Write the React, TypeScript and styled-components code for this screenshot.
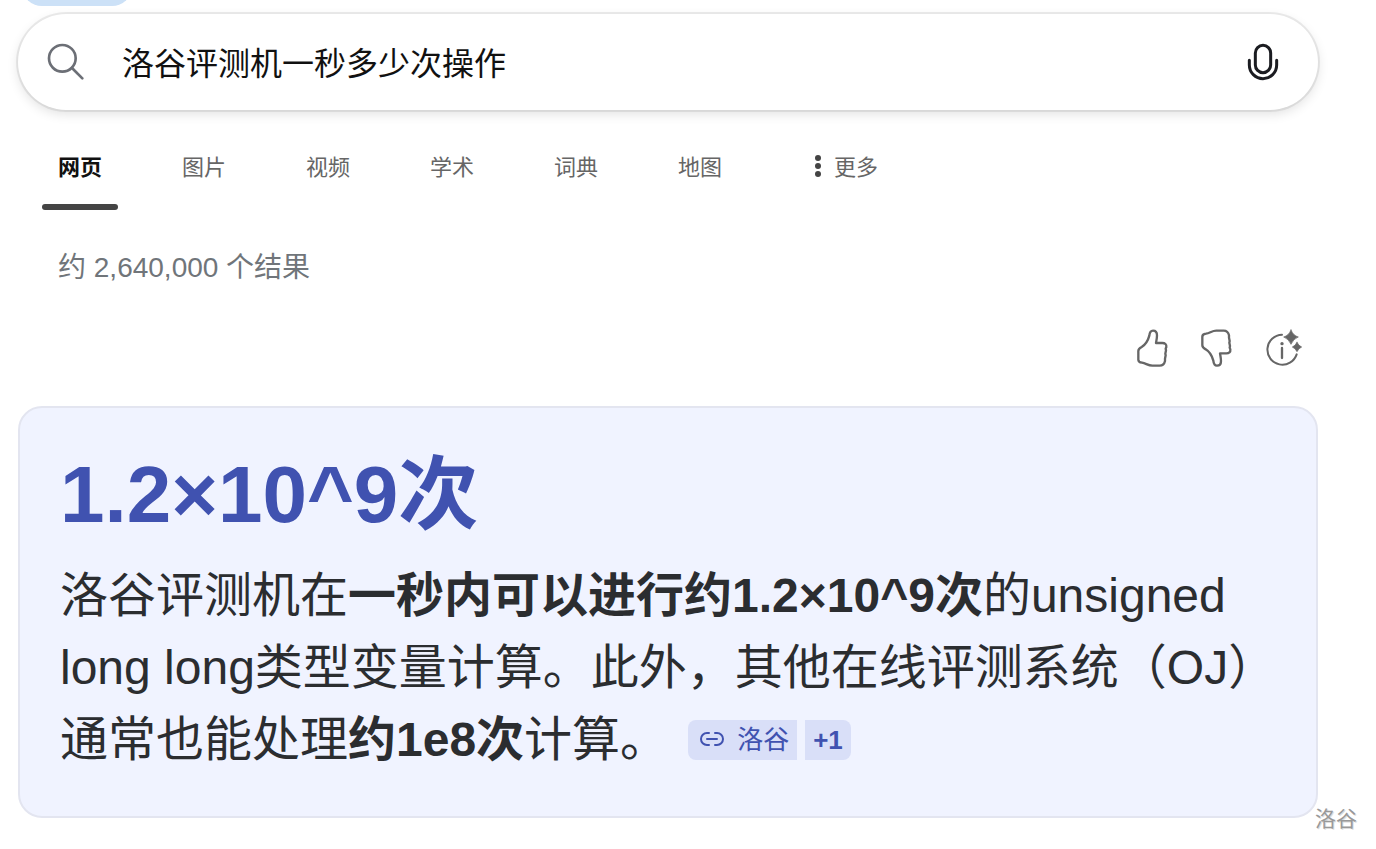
import React from "react";
import styled, { createGlobalStyle } from "styled-components";

const GlobalStyle = createGlobalStyle`
  * { box-sizing: border-box; }
  body {
    margin: 0;
    background: #fff;
    font-family: "Liberation Sans", "Noto Sans CJK SC", sans-serif;
  }
  button, input { font: inherit; }
  button { border: 0; background: none; padding: 0; cursor: pointer; }
`;

const Page = styled.div`
  position: relative;
  padding: 0 58px 30px 18px;
`;

const TopStrip = styled.header`
  display: flex;
  align-items: flex-end;
  height: 6px;
  padding-left: 4px;
  overflow: hidden;
`;

const Pill = styled.button`
  flex: none;
  width: 110px;
  height: 40px;
  border-radius: 20px;
  && { background: #cce1f7; }
`;

const SearchForm = styled.form`
  display: flex;
  align-items: center;
  height: 96px;
  margin-top: 8px;
  padding: 0 35px 0 28px;
  border-radius: 48px;
  background: #fff;
  box-shadow: 0 0 0 2px rgba(0, 0, 0, 0.07), 0 4px 12px rgba(0, 0, 0, 0.12);
`;

const SearchInput = styled.input`
  flex: 1;
  min-width: 0;
  margin: 0 36px;
  padding: 4px 0 0;
  border: 0;
  outline: 0;
  background: transparent;
  color: #111;
  font-size: 32px;
  line-height: 48px;
`;

const IconButton = styled.button`
  display: flex;
  color: ${(p) => p.color};
`;

const Tabs = styled.nav`
  display: flex;
  gap: 48px;
  margin-top: 40px;
  padding-left: 24px;
`;

const Tab = styled.a<{ $active?: boolean }>`
  display: flex;
  flex-direction: column;
  gap: 18px;
  color: ${(p) => (p.$active ? "#111" : "#666")};
  font-size: 22px;
  font-weight: ${(p) => (p.$active ? 700 : 400)};
  line-height: 36px;
  text-decoration: none;

  &::after {
    content: "";
    height: 6px;
    border-radius: 3px;
    background: ${(p) => (p.$active ? "#444" : "transparent")};
  }
`;

const TabLabel = styled.span`
  display: flex;
  align-items: center;
  padding: 0 16px;
`;

const ResultCount = styled.p`
  margin: 40px 0 0;
  padding-left: 40px;
  color: #70757a;
  font-size: 28px;
  line-height: 36px;
`;

const Feedback = styled.div`
  display: flex;
  justify-content: flex-end;
  gap: 24px;
  margin-top: 42px;
  padding-right: 14px;
`;

const AnswerCard = styled.section`
  margin-top: 38px;
  padding: 40px;
  border: 2px solid #e3e5f0;
  border-radius: 24px;
  background: #f0f3ff;
`;

const Headline = styled.h1`
  margin: 0 0 18px;
  color: #4052b0;
  font-size: 80px;
  line-height: 94px;
`;

const Answer = styled.p`
  margin: 0;
  color: #2b2d30;
  font-size: 48px;
  line-height: 72px;
`;

const Sources = styled.span`
  display: inline-flex;
  gap: 8px;
  margin: 16px 0 0 20px;
  vertical-align: top;
`;

const Source = styled.a<{ $side: "left" | "right" }>`
  display: flex;
  align-items: center;
  gap: 13px;
  height: 40px;
  padding: 0 8px 0 ${(p) => (p.$side === "left" ? "12px" : "8px")};
  border-radius: ${(p) => (p.$side === "left" ? "8px 0 0 8px" : "0 8px 8px 0")};
  background: #d9dff8;
  color: #4052b0;
  font-size: 26px;
  font-weight: ${(p) => (p.$side === "left" ? 400 : 700)};
  line-height: 40px;
  text-decoration: none;
`;

const Watermark = styled.span`
  position: absolute;
  right: 19px;
  bottom: 13px;
  color: #999;
  font-size: 21px;
  line-height: 32px;
  text-shadow: 1px 1px 0 #ddd;
`;

const SearchIcon = () => (
  <svg width="40" height="40" viewBox="138 126 120 120" fill="none" stroke="currentColor" strokeWidth="8" strokeLinecap="round">
    <circle cx="187" cy="175" r="40" />
    <path d="M216 204 247 235" />
  </svg>
);

const MicIcon = () => (
  <svg width="40" height="40" viewBox="189 126 120 120" fill="none" stroke="currentColor" strokeWidth="9" strokeLinecap="round">
    <rect x="226" y="136" width="46" height="82" rx="23" />
    <path d="M208 181v14a41 41 0 0 0 82 0v-14" />
  </svg>
);

const DotsIcon = () => (
  <svg width="32" height="32" viewBox="0 0 32 32" fill="#444">
    <circle cx="16" cy="6" r="3" />
    <circle cx="16" cy="14" r="3" />
    <circle cx="16" cy="22" r="3" />
  </svg>
);

const thumb =
  "M85 123C85 116 89 114 95 111C108 103 114 92 118 77C119 66 122 62 129 62C138 62 141 68 141 76C141 85 139 92 138 99H157C165 99 170 103 169 111L167 116L168 121L166 131L167 136L165 146V153C163 162 158 167 149 167H127C114 167 108 160 96 158C89 157 85 155 85 149Z";

const ThumbUpIcon = () => (
  <svg width="40" height="40" viewBox="66 54 120 120" fill="none" stroke="currentColor" strokeWidth="7" strokeLinejoin="round">
    <path d={thumb} />
  </svg>
);

const ThumbDownIcon = () => (
  <svg width="40" height="40" viewBox="66 54 120 120" fill="none" stroke="currentColor" strokeWidth="7" strokeLinejoin="round">
    <path d={thumb} transform="matrix(1 0 0 -1 0 229)" />
  </svg>
);

const InfoSparkleIcon = () => (
  <svg width="44" height="40" viewBox="450 54 132 120" fill="none" stroke="currentColor" strokeWidth="6" strokeLinecap="round">
    <path d="M516 74A45 45 0 1 0 560 133" />
    <path d="M516 114V144" strokeWidth="7" />
    <circle cx="516" cy="101" r="5" fill="currentColor" stroke="none" />
    <path strokeWidth="2" fill="currentColor" d="M543 60Q550 77 565 81Q550 86 543 103Q536 86 521 81Q536 77 543 60Z" />
    <path strokeWidth="2" fill="currentColor" d="M561 97Q566 108 575 111Q566 115 561 125Q556 115 547 111Q556 108 561 97Z" />
  </svg>
);

const LinkIcon = () => (
  <svg width="24" height="16" viewBox="0 0 24 16" fill="none" stroke="currentColor" strokeWidth="2" strokeLinecap="round">
    <path d="M9 1H7a6 6 0 0 0 0 12h2M15 1h2a6 6 0 0 1 0 12h-2M7 7h10" />
  </svg>
);

const tabs = ["网页", "图片", "视频", "学术", "词典", "地图"];

export default function App() {
  return (
    <Page>
      <GlobalStyle />
      <TopStrip>
        <Pill type="button" />
      </TopStrip>
      <SearchForm role="search" onSubmit={(e) => e.preventDefault()}>
        <IconButton color="#6c6f76" type="submit" aria-label="搜索">
          <SearchIcon />
        </IconButton>
        <SearchInput aria-label="搜索" defaultValue="洛谷评测机一秒多少次操作" />
        <IconButton color="#1b1c21" type="button" aria-label="语音搜索">
          <MicIcon />
        </IconButton>
      </SearchForm>
      <Tabs>
        {tabs.map((name, i) => (
          <Tab key={name} href="#" $active={i === 0}>
            <TabLabel>{name}</TabLabel>
          </Tab>
        ))}
        <Tab href="#">
          <TabLabel>
            <DotsIcon />
            更多
          </TabLabel>
        </Tab>
      </Tabs>
      <main>
        <ResultCount>约 2,640,000 个结果</ResultCount>
        <Feedback>
          <IconButton color="#666" type="button" aria-label="赞">
            <ThumbUpIcon />
          </IconButton>
          <IconButton color="#666" type="button" aria-label="踩">
            <ThumbDownIcon />
          </IconButton>
          <IconButton color="#666" type="button" aria-label="信息">
            <InfoSparkleIcon />
          </IconButton>
        </Feedback>
        <AnswerCard>
          <Headline>1.2×10^9次</Headline>
          <Answer>
            洛谷评测机在<strong>一秒内可以进行约1.2×10^9次</strong>的unsigned long
            long类型变量计算。此外，其他在线评测系统（OJ）通常也能处理<strong>约1e8次</strong>计算。
            <Sources>
              <Source href="#" $side="left">
                <LinkIcon />
                洛谷
              </Source>
              <Source href="#" $side="right">+1</Source>
            </Sources>
          </Answer>
        </AnswerCard>
      </main>
      <Watermark>洛谷</Watermark>
    </Page>
  );
}
